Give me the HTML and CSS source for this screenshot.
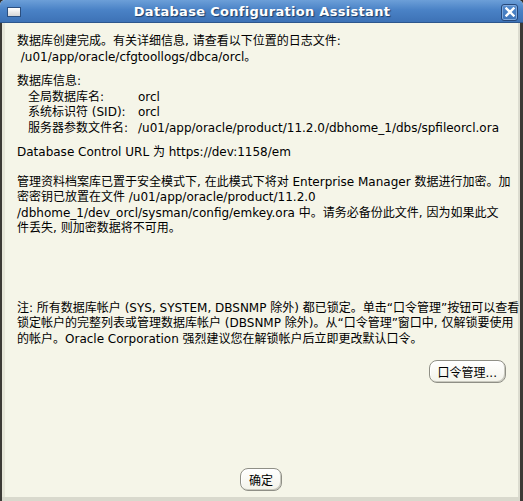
FILE: index.html
```html
<!DOCTYPE html>
<html lang="zh-CN">
<head>
    <meta charset="UTF-8">
    <title>Database Configuration Assistant</title>
    <link rel="stylesheet" href="styles.css">
</head>
<body>

    <div class="window">
        <div class="titlebar">
            <span class="menu-icon"></span>
            <span class="title">Database Configuration Assistant</span>
            <span class="close-btn">
                <svg width="10" height="10" viewBox="0 0 10 10">
                    <path d="M1.5 1.5 L8.5 8.5 M8.5 1.5 L1.5 8.5" stroke="#ffffff" stroke-width="2.4" stroke-linecap="square"/>
                </svg>
            </span>
        </div>

        <div class="content">
            <p class="block">数据库创建完成。有关详细信息, 请查看以下位置的日志文件:<br>&nbsp;/u01/app/oracle/cfgtoollogs/dbca/orcl。</p>

            <div class="block">
                <div>数据库信息:</div>
                <div class="info-row"><span class="label">全局数据库名:</span><span>orcl</span></div>
                <div class="info-row"><span class="label">系统标识符 (SID):</span><span>orcl</span></div>
                <div class="info-row"><span class="label">服务器参数文件名:</span><span>/u01/app/oracle/product/11.2.0/dbhome_1/dbs/spfileorcl.ora</span></div>
            </div>

            <p class="block url">Database Control URL 为 https://dev:1158/em</p>

            <p class="block">管理资料档案库已置于安全模式下, 在此模式下将对 Enterprise Manager 数据进行加密。加<br>密密钥已放置在文件 /u01/app/oracle/product/11.2.0<br>/dbhome_1/dev_orcl/sysman/config/emkey.ora 中。请务必备份此文件, 因为如果此文<br>件丢失, 则加密数据将不可用。</p>

            <div class="spacer"></div>

            <p class="block note">注: 所有数据库帐户 (SYS, SYSTEM, DBSNMP 除外) 都已锁定。单击“口令管理”按钮可以查看<br>锁定帐户的完整列表或管理数据库帐户 (DBSNMP 除外)。从“口令管理”窗口中, 仅解锁要使用<br>的帐户。Oracle Corporation 强烈建议您在解锁帐户后立即更改默认口令。</p>

            <div class="actions">
                <button class="btn">口令管理...</button>
            </div>

            <div class="footer">
                <button class="btn">确定</button>
            </div>
        </div>
    </div>

</body>
</html>
```

FILE: styles.css
```css
body {
    margin: 0;
    font-family: "DejaVu Sans", "Noto Sans CJK SC", sans-serif;
    font-size: 12px;
    color: #000000;
    background: #2e2e2e;
}
.window {
    width: 523px;
    height: 501px;
    display: flex;
    flex-direction: column;
    box-sizing: border-box;
    background: #f5f5e8;
    border-radius: 5px 5px 0 0;
    overflow: hidden;
}
.titlebar {
    height: 23px;
    flex: none;
    display: flex;
    align-items: center;
    padding: 0 4px 0 7px;
    background: linear-gradient(#6c9fd8, #4a82c6 45%, #3d72b6);
    border-bottom: 1px solid #2d568c;
    box-sizing: border-box;
}
.menu-icon {
    width: 12px;
    height: 8px;
    margin-top: 1px;
    border: 1px solid #2b4f80;
    background: linear-gradient(#ffffff, #d6d6d6);
}
.title {
    flex: 1;
    text-align: center;
    color: #ffffff;
    font-weight: bold;
    font-size: 13px;
    letter-spacing: 0.3px;
    text-shadow: 1px 1px 1px #1e3d66;
    padding-left: 2px;
}
.close-btn {
    width: 17px;
    height: 17px;
    margin-top: 2px;
    margin-right: 1px;
    display: flex;
    align-items: center;
    justify-content: center;
    border: 1px solid #26487a;
    border-radius: 3px;
    box-shadow: inset 0 0 0 1px #80a9dc;
    box-sizing: border-box;
}
.content {
    flex: 1;
    display: flex;
    flex-direction: column;
    padding: 11px 10px 0 15px;
    line-height: 15.5px;
    white-space: nowrap;
    border-left: 2px solid #3c3a36;
    border-right: 3px solid #3c3a36;
    box-shadow: inset 3px 0 0 #e6e6d8, inset -2px 0 0 #dcdcd0;
}
.block {
    margin: 0 0 9px 0;
}
.url {
    margin-bottom: 14px;
}
.info-row {
    display: flex;
    padding-left: 11px;
}
.info-row .label {
    width: 110px;
}
.spacer {
    flex: 1;
}
.note {
    margin-bottom: 13px;
}
.actions {
    display: flex;
    justify-content: flex-end;
    padding-right: 4px;
}
.btn {
    font-family: inherit;
    font-size: 12px;
    color: #000000;
    height: 23px;
    padding: 0 8px;
    border: 1px solid #8f8f86;
    border-radius: 8px;
    background: linear-gradient(#ffffff, #f3f3ea);
    box-shadow: inset 1px 1px 0 #ffffff, inset -1px -1px 0 #c9c9bf;
}
.footer {
    display: flex;
    justify-content: center;
    padding: 85px 0 6px 0;
    margin-left: -15px;
    margin-right: -10px;
    border-bottom: 4px solid #d9d9cd;
    box-shadow: 0 1px 0 #3c3a36;
}
```
